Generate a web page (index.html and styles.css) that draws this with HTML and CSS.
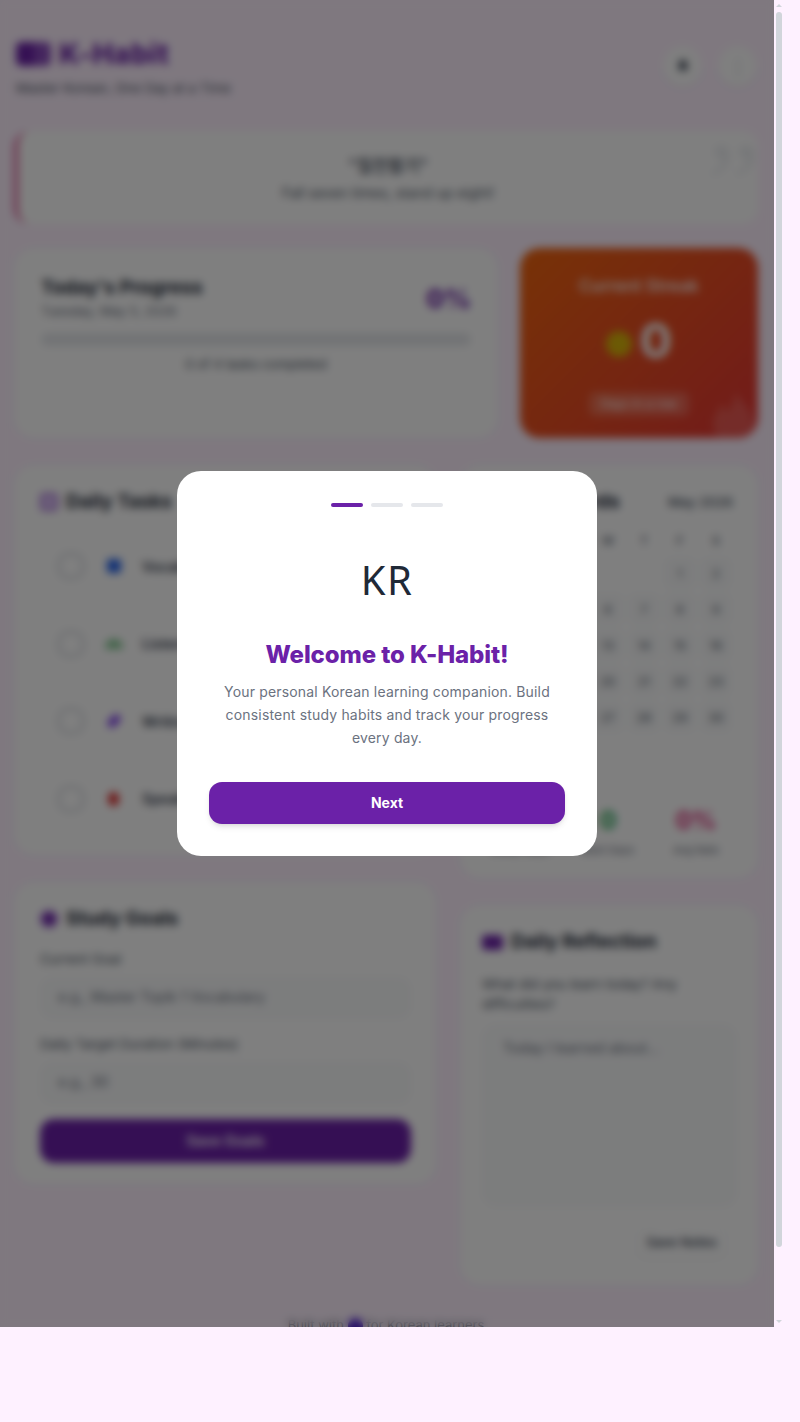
FILE: index.html
```html
<!DOCTYPE html>
<html lang="en">

<head>
    <meta charset="UTF-8">
    <title>K-Habit</title>
    <link rel="stylesheet" href="styles.css">
</head>

<body>
    <div class="screen">
        <div class="page">
            <!-- Header -->
            <header class="header">
                <div>
                    <div class="brand">
                        <span class="brand-icon"><span></span><span></span></span>
                        <h1>K-Habit</h1>
                    </div>
                    <p class="tagline">Master Korean, One Day at a Time</p>
                </div>
                <div class="header-actions">
                    <button class="round-btn">
                        <svg width="12" height="14" viewBox="0 0 14 16"><path d="M7 1c-3 0-4.500 2-4.500 5v3L1 12h12l-1.500-3V6C11.500 3 10 1 7 1zM5.500 13.500a1.500 1.500 0 0 0 3 0z" fill="#374151"/></svg>
                    </button>
                    <button class="round-btn muted">⋮</button>
                </div>
            </header>

            <!-- Quote -->
            <section class="quote">
                <span class="quote-mark">”</span>
                <p class="quote-ko">"칠전팔기"</p>
                <p class="quote-en">Fall seven times, stand up eight!</p>
            </section>

            <!-- Progress and streak -->
            <div class="top-row">
                <section class="card progress-card">
                    <div class="progress-head">
                        <div>
                            <h2>Today's Progress</h2>
                            <p class="date">Tuesday, May 5, 2026</p>
                        </div>
                        <strong class="percent">0%</strong>
                    </div>
                    <div class="bar"></div>
                    <p class="bar-note">0 of 4 tasks completed</p>
                </section>
                <section class="streak-card">
                    <p class="streak-title">Current Streak</p>
                    <div class="streak-count">
                        <span class="streak-emoji"></span>
                        <strong>0</strong>
                    </div>
                    <span class="streak-pill">Days in a row</span>
                    <svg class="streak-flame" width="44" height="62" viewBox="0 0 42 54"><path d="M22 1c2 10 18 17 18 33 0 11-8 19-19 19S1 45 1 34c0-9 6-13 8-20 3 3 5 6 5 9 5-5 8-13 8-22z" fill="#fff" fill-opacity=".16"/></svg>
                </section>
            </div>

            <div class="columns">
                <!-- Left column -->
                <div class="column column-left">
                    <section class="card tasks-card">
                        <h2 class="card-title"><span class="icon-check"></span>Daily Tasks</h2>
                        <ul class="tasks">
                            <li class="task"><span class="checkbox"></span><span class="task-icon blue"></span><span class="task-name">Vocabulary</span></li>
                            <li class="task"><span class="checkbox"></span><span class="task-icon green"></span><span class="task-name">Listening</span></li>
                            <li class="task"><span class="checkbox"></span><span class="task-icon violet"></span><span class="task-name">Writing</span></li>
                            <li class="task"><span class="checkbox"></span><span class="task-icon red"></span><span class="task-name">Speaking</span></li>
                        </ul>
                    </section>

                    <section class="card goals-card">
                        <h2 class="card-title"><span class="icon-goal"></span>Study Goals</h2>
                        <label class="field-label">Current Goal</label>
                        <div class="field">e.g., Master Topik 1 Vocabulary</div>
                        <label class="field-label">Daily Target Duration (Minutes)</label>
                        <div class="field">e.g., 30</div>
                        <button class="save-goals">Save Goals</button>
                    </section>
                </div>

                <!-- Right column -->
                <div class="column column-right">
                    <section class="card calendar-card">
                        <div class="calendar-head">
                            <h2 class="card-title">Study Records</h2>
                            <span class="month">May 2026</span>
                        </div>
                        <div class="weekdays">
                            <span>S</span><span>M</span><span>T</span><span>W</span><span>T</span><span>F</span><span>S</span>
                        </div>
                        <div class="days">
                            <span></span><span></span><span></span><span></span><span></span><span class="day">1</span><span class="day">2</span>
                            <span class="day">3</span><span class="day">4</span><span class="day">5</span><span class="day">6</span><span class="day">7</span><span class="day">8</span><span class="day">9</span>
                            <span class="day">10</span><span class="day">11</span><span class="day">12</span><span class="day">13</span><span class="day">14</span><span class="day">15</span><span class="day">16</span>
                            <span class="day">17</span><span class="day">18</span><span class="day">19</span><span class="day">20</span><span class="day">21</span><span class="day">22</span><span class="day">23</span>
                            <span class="day">24</span><span class="day">25</span><span class="day">26</span><span class="day">27</span><span class="day">28</span><span class="day">29</span><span class="day">30</span>
                            <span class="day">31</span>
                        </div>
                        <div class="stats">
                            <div class="stat"><strong class="purple">0</strong><small>Study Days</small></div>
                            <div class="stat"><strong class="green-text">0</strong><small>Best Days</small></div>
                            <div class="stat"><strong class="pink-text">0%</strong><small>Avg Rate</small></div>
                        </div>
                    </section>

                    <section class="card reflection-card">
                        <h2 class="card-title"><span class="icon-note"></span>Daily Reflection</h2>
                        <p class="prompt">What did you learn today? Any difficulties?</p>
                        <div class="notes">Today I learned about...</div>
                        <div class="notes-actions">
                            <button class="save-notes">Save Notes</button>
                        </div>
                    </section>
                </div>
            </div>

            <footer class="footer">Built with <span class="heart"></span> for Korean learners</footer>

            <!-- Onboarding modal -->
            <div class="overlay">
                <div class="modal">
                    <div class="steps">
                        <span class="step active"></span>
                        <span class="step"></span>
                        <span class="step"></span>
                    </div>
                    <div class="modal-flag">KR</div>
                    <h2 class="modal-title">Welcome to K-Habit!</h2>
                    <p class="modal-text">Your personal Korean learning companion. Build consistent study habits and track your progress every day.</p>
                    <button class="modal-next">Next</button>
                </div>
            </div>
        </div>

        <!-- Scrollbar -->
        <div class="rail">
            <span class="arrow-up"></span>
            <span class="thumb"></span>
            <span class="arrow-down"></span>
        </div>
    </div>
</body>

</html>
```

FILE: styles.css
```css
* {
    box-sizing: border-box;
}

body {
    margin: 0;
    font-family: Inter, "Noto Sans", Arial, sans-serif;
    background-color: #fef1ff;
    color: #1f2937;
}

h1,
h2,
p,
ul {
    margin: 0;
    padding: 0;
}

button {
    font-family: inherit;
    border: 0;
}

.screen {
    display: flex;
    height: 1327px;
}

.page {
    position: relative;
    width: 774px;
    height: 1327px;
    overflow: hidden;
    padding: 36px 16px 0 14px;
}

/* Scrollbar */
.rail {
    width: 6px;
    margin-left: 2px;
    display: flex;
    flex-direction: column;
    align-items: center;
}

.arrow-up {
    margin-top: 4px;
    border-left: 3px solid transparent;
    border-right: 3px solid transparent;
    border-bottom: 3px solid #d1d5db;
}

.thumb {
    width: 6px;
    height: 1235px;
    margin-top: 5px;
    border-radius: 3px;
    background: #d1d5db;
}

.arrow-down {
    margin-top: 73px;
    border-left: 3px solid transparent;
    border-right: 3px solid transparent;
    border-top: 3px solid #d1d5db;
}

/* Header */
.header {
    display: flex;
    justify-content: space-between;
    align-items: center;
    height: 60px;
    padding-left: 2px;
}

.brand {
    display: flex;
    align-items: center;
    gap: 8px;
}

.brand-icon {
    display: flex;
    width: 35px;
    height: 24px;
    border-radius: 5px;
    overflow: hidden;
}

.brand-icon span {
    flex: 1;
    background: #6b21a8;
}

.brand-icon span + span {
    background: #8a4bbd;
}

.brand h1 {
    font-size: 28px;
    font-weight: 800;
    line-height: 36px;
    letter-spacing: 0.6px;
    color: #6b21a8;
}

.tagline {
    margin-top: 8px;
    font-size: 13.300px;
    color: #4b5563;
}

.header-actions {
    display: flex;
    gap: 16px;
    margin-right: 1px;
}

.round-btn {
    width: 39px;
    height: 40px;
    border-radius: 50%;
    background: #fff;
    display: flex;
    align-items: center;
    justify-content: center;
    box-shadow: 0 1px 3px rgba(0, 0, 0, 0.08);
}

.round-btn.muted {
    font-size: 18px;
    color: #9ca3af;
}

/* Quote */
.quote {
    position: relative;
    height: 93px;
    margin-top: 35px;
    padding-top: 22px;
    text-align: center;
    background: #fff;
    border-left: 4px solid #d8528f;
    border-radius: 16px;
}

.quote-mark {
    position: absolute;
    top: -6px;
    right: -2px;
    font-family: "Liberation Serif", serif;
    font-size: 120px;
    line-height: 120px;
    color: #eef0f3;
}

.quote-ko {
    font-family: Inter, "Noto Sans CJK KR", sans-serif;
    font-size: 17px;
    line-height: 26px;
    font-weight: 500;
    color: #374151;
}

.quote-en {
    margin-top: 4px;
    font-size: 14px;
    line-height: 20px;
    color: #4b5563;
}

/* Cards */
.card {
    background: #fff;
    border: 1px solid #f3f4f6;
    border-radius: 20px;
}

.card-title {
    display: flex;
    align-items: center;
    gap: 8px;
    font-size: 19px;
    font-weight: 700;
    line-height: 24px;
    color: #1f2937;
}

.top-row {
    display: flex;
    gap: 22px;
    margin-top: 24px;
}

.progress-card {
    width: 484px;
    height: 190px;
    padding: 26px 26px 0;
}

.progress-head {
    display: flex;
    justify-content: space-between;
    align-items: flex-end;
}

.progress-head h2 {
    font-size: 19px;
    font-weight: 700;
    line-height: 26px;
}

.date {
    margin-top: 1px;
    font-size: 13px;
    line-height: 18px;
    color: #6b7280;
}

.percent {
    margin-bottom: 4px;
    font-size: 26px;
    font-weight: 800;
    line-height: 34px;
    color: #6b21a8;
}

.bar {
    height: 13px;
    margin-top: 13px;
    border-radius: 7px;
    background: #e5e7eb;
}

.bar-note {
    margin-top: 9px;
    text-align: center;
    font-size: 13px;
    line-height: 18px;
    color: #4b5563;
}

.streak-card {
    position: relative;
    width: 238px;
    height: 190px;
    padding-top: 28px;
    overflow: hidden;
    text-align: center;
    color: #fff;
    border-radius: 20px;
    background: linear-gradient(135deg, #f0650e, #e53535);
}

.streak-title {
    font-size: 17px;
    font-weight: 600;
    line-height: 20px;
    opacity: 0.85;
}

.streak-count {
    display: flex;
    justify-content: center;
    align-items: center;
    gap: 8px;
    height: 60px;
    margin-top: 15px;
}

.streak-emoji {
    width: 26px;
    height: 26px;
    margin-top: 6px;
    border-radius: 50%;
    background: #d9b40a;
}

.streak-count strong {
    font-size: 48px;
    line-height: 60px;
}

.streak-pill {
    display: inline-block;
    margin-top: 21px;
    padding: 4px 12px;
    font-size: 12px;
    line-height: 16px;
    border-radius: 6px;
    background: rgba(255, 255, 255, 0.2);
}

.streak-flame {
    position: absolute;
    right: 2px;
    bottom: -10px;
}

.columns {
    display: flex;
    gap: 24px;
    margin-top: 27px;
}

.column {
    display: flex;
    flex-direction: column;
    gap: 27px;
}

.column-left {
    width: 422px;
}

.column-right {
    width: 298px;
}

/* Tasks */
.tasks-card {
    height: 390px;
    padding: 24px 24px 0 25px;
}

.icon-check {
    width: 18px;
    height: 18px;
    border-radius: 4px;
    border: 4px solid #b07fdc;
    background: #e9d5ff;
}

.tasks {
    list-style: none;
    display: flex;
    flex-direction: column;
    gap: 11.600px;
    margin: 19px 0 0 -1px;
}

.task {
    display: flex;
    align-items: center;
    height: 66px;
    padding-left: 18px;
    border: 1px solid #f3f4f6;
    border-radius: 14px;
}

.checkbox {
    width: 26px;
    height: 26px;
    border: 2px solid #c4c9d1;
    border-radius: 10px;
    background: #fff;
}

.task-icon {
    width: 14px;
    height: 14px;
    margin: 0 21px 0 23px;
    border-radius: 3px;
}

.task-icon.blue {
    background: #2563eb;
}

.task-icon.green {
    width: 18px;
    height: 10px;
    margin: 0 19px 0 21px;
    border-radius: 9px 9px 2px 2px;
    background: #86c994;
}

.task-icon.violet {
    height: 8px;
    transform: rotate(-45deg);
    background: #7c3aed;
}

.task-icon.red {
    width: 11px;
    margin: 0 23px 0 24px;
    border-radius: 50%;
    background: #dc2626;
}

.task-name {
    font-size: 14px;
    font-weight: 600;
    color: #374151;
}

/* Goals */
.goals-card {
    height: 302px;
    padding: 24px 24px 0 25px;
}

.icon-goal {
    width: 18px;
    height: 18px;
    border-radius: 50%;
    background: #6b21a8;
    border: 3px solid #a06bd0;
}

.field-label {
    display: block;
    margin-top: 19px;
    font-size: 13.500px;
    line-height: 18px;
    color: #4b5563;
}

.field {
    height: 42px;
    margin-top: 9px;
    padding-left: 17px;
    font-size: 14px;
    line-height: 38px;
    color: #6b7280;
    background: #f9fafb;
    border: 1px solid #f3f4f6;
    border-radius: 12px;
}

.field-label + .field + .field-label {
    margin-top: 16px;
}

.save-goals {
    display: block;
    width: 100%;
    height: 44px;
    margin-top: 15px;
    padding-bottom: 3px;
    color: #fff;
    font-size: 14.500px;
    font-weight: 600;
    border-radius: 14px;
    background: #6b1fa8;
}

/* Calendar */
.calendar-card {
    height: 413px;
    padding: 24px 24px 0 23px;
}

.calendar-head {
    display: flex;
    justify-content: space-between;
    align-items: center;
}

.month {
    font-size: 13.500px;
    font-weight: 500;
    color: #4b5563;
}

.weekdays,
.days {
    display: grid;
    grid-template-columns: repeat(7, 32px);
    gap: 4px;
    justify-items: center;
}

.weekdays {
    margin-top: 17px;
    font-size: 12px;
    font-weight: 600;
    line-height: 20px;
    color: #6b7280;
}

.days {
    margin-top: 6px;
    grid-auto-rows: 32px;
    font-size: 12px;
    color: #4b5563;
}

.day {
    display: flex;
    align-items: center;
    justify-content: center;
    width: 32px;
    height: 32px;
    border-radius: 8px;
    background: #f9fafb;
}

.stats {
    display: grid;
    grid-template-columns: repeat(3, 88px);
    margin: 36px 0 0 -8px;
    text-align: center;
}

.stat strong {
    display: block;
    font-size: 24px;
    line-height: 32px;
}

.stat small {
    display: block;
    margin-top: 7px;
    font-size: 11px;
    line-height: 12px;
    color: #6b7280;
}

.purple {
    color: #6b21a8;
}

.green-text {
    color: #16a34a;
}

.pink-text {
    color: #db2777;
}

/* Reflection */
.reflection-card {
    height: 380px;
    padding: 24px 20px 0 21px;
}

.icon-note {
    width: 21px;
    height: 15px;
    border-radius: 3px;
    background: #6b21a8;
}

.prompt {
    width: 210px;
    margin-top: 21px;
    font-size: 13.500px;
    line-height: 19.500px;
    color: #4b5563;
}

.notes {
    height: 183px;
    margin-top: 10px;
    padding: 13px 20px;
    font-size: 14px;
    line-height: 20px;
    color: #6b7280;
    background: #f9fafb;
    border: 1px solid #f3f4f6;
    border-radius: 14px;
}

.notes-actions {
    display: flex;
    justify-content: flex-end;
    margin-top: 18px;
    padding-right: 10px;
}

.save-notes {
    width: 91px;
    height: 33px;
    font-size: 13px;
    font-weight: 500;
    color: #374151;
    background: #fff;
    border: 1px solid #f3f4f6;
    border-radius: 10px;
    box-shadow: 0 1px 3px rgba(0, 0, 0, 0.06);
}

.footer {
    margin-top: 32px;
    text-align: center;
    font-size: 13px;
    line-height: 16px;
    color: #6b7280;
}

.heart {
    display: inline-block;
    width: 15px;
    height: 15px;
    vertical-align: -3px;
    border-radius: 50%;
    background: #4f1fd1;
}

/* Onboarding modal */
.overlay {
    position: absolute;
    top: 0;
    left: 0;
    width: 100%;
    height: 100%;
    display: flex;
    align-items: center;
    justify-content: center;
    background: rgba(0, 0, 0, 0.5);
    backdrop-filter: blur(4px);
}

.modal {
    width: 420px;
    height: 385px;
    padding: 32px;
    text-align: center;
    background: #fff;
    border-radius: 24px;
}

.steps {
    display: flex;
    justify-content: center;
    gap: 8px;
}

.step {
    width: 32px;
    height: 4px;
    border-radius: 2px;
    background: #e5e7eb;
}

.step.active {
    background: #6b21a8;
}

.modal-flag {
    margin-top: 43px;
    font-family: "Noto Sans", sans-serif;
    font-size: 40px;
    line-height: 60px;
    letter-spacing: 1.500px;
    color: #1f2937;
}

.modal-title {
    margin-top: 29px;
    font-size: 24px;
    font-weight: 800;
    line-height: 32px;
    letter-spacing: -0.1px;
    color: #6b21a8;
}

.modal-text {
    margin-top: 9px;
    font-size: 14px;
    line-height: 23px;
    letter-spacing: 0.17px;
    color: #6b7280;
}

.modal-next {
    display: block;
    width: 100%;
    height: 42px;
    margin-top: 33px;
    padding-bottom: 2px;
    color: #fff;
    font-size: 14px;
    font-weight: 700;
    border-radius: 13px;
    background: #6b21a8;
    box-shadow: 0 4px 6px -1px rgba(0, 0, 0, 0.1), 0 2px 4px -2px rgba(0, 0, 0, 0.1);
}
```
